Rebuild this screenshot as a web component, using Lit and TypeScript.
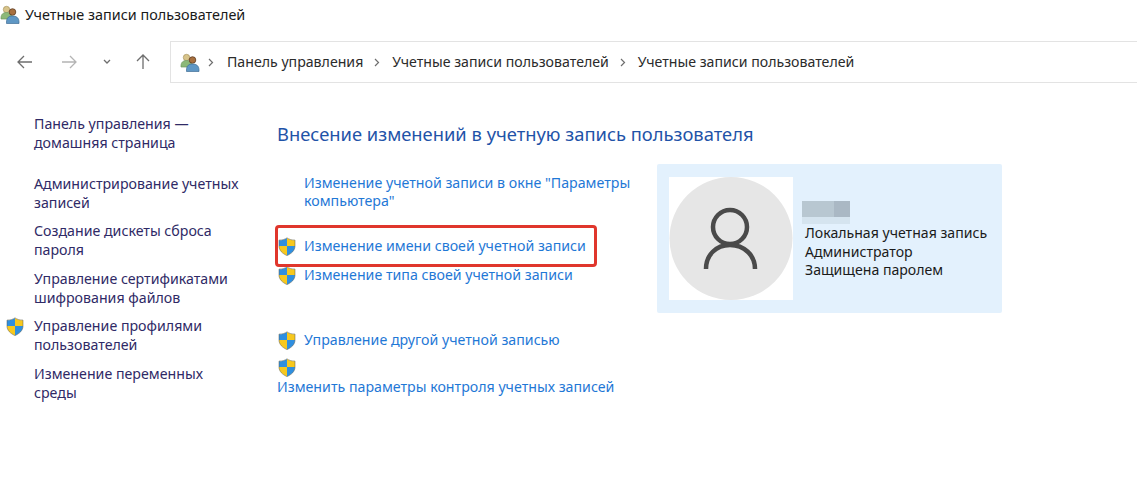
import { LitElement, html, css, svg } from "lit";
import { customElement } from "lit/decorators.js";

const usersIcon = (size: number) => html`<svg width=${size} height=${size} viewBox="0 0 20 20">
  <circle cx="6.5" cy="5.5" r="3.2" fill="#d8c48a" stroke="#a89560" stroke-width=".7"/>
  <path d="M1 14c0-4 2.5-5.5 5.5-5.5S12 10 12 14v1H1z" fill="#8cb878" stroke="#6f9660" stroke-width=".7"/>
  <circle cx="12.5" cy="8" r="3.3" fill="#a8703f" stroke="#5e3c22" stroke-width=".8"/>
  <path d="M6.5 18c0-4.5 2.5-6 6-6s6.5 1.500 6.500 6v1.500H6.500z" fill="#5f97c4" stroke="#3f6f96" stroke-width=".7"/>
</svg>`;

const shield = html`<svg class="shield" width="18" height="19" viewBox="0 0 18 19">
  <path d="M9 1C7 2.600 4 3.300 1 3.300V9h8z" fill="#2f8fe0"/>
  <path d="M9 1c2 1.600 5 2.300 8 2.300V9H9z" fill="#f7c81e"/>
  <path d="M1 9h8v9.500C4.500 16.600 1 13.500 1 9z" fill="#f7c81e"/>
  <path d="M9 9h8c0 4.500-3.500 7.600-8 9.500z" fill="#2f8fe0"/>
  <path d="M9 .8C7 2.400 4 3.100 1 3.100V9c0 4.500 3.500 7.600 8 9.600 4.500-2 8-5.100 8-9.600V3.100c-3 0-6-.7-8-2.300z" fill="none" stroke="#5a5a4a" stroke-width=".5"/>
</svg>`;

const navBack = svg`<path d="M16 8H2M8 2 2 8l6 6" fill="none" stroke-width="1.300"/>`;
const navForward = svg`<path d="M1 8h14M9 2l6 6-6 6" fill="none" stroke-width="1.300"/>`;
const navUp = svg`<path d="M8 16V2M2 8l6-6 6 6" fill="none" stroke-width="1.300"/>`;

@customElement("app-root")
export class AppRoot extends LitElement {
  static styles = css`
    :host {
      display: block;
      width: 1137px;
      height: 503px;
      background: #fff;
      overflow: hidden;
      position: relative;
      font-family: "Noto Sans", "Open Sans", sans-serif;
      font-size: 14.2px;
      color: #000;
    }
    .title {
      display: flex;
      align-items: center;
      height: 28px;
      gap: 5px;
      font-size: 14.4px;
      color: #1a1a1a;
    }
    .nav {
      display: flex;
      align-items: stretch;
      height: 42px;
      margin-top: 13px;
    }
    .btns {
      width: 170px;
      display: flex;
      align-items: center;
      flex: none;
    }
    .btn { stroke: #6e6e6e; display: block; flex: none; }
    .btn.off { stroke: #b4b4b4; }
    .back { margin-left: 16px; }
    .fwd { margin-left: 27px; }
    .down { margin-left: 26px; }
    .up { margin-left: 24px; }
    .crumbs {
      flex: 1;
      display: flex;
      align-items: center;
      border: 1px solid #e3e3e3;
      border-right: none;
      padding-left: 9px;
      color: #2b2b2b;
      white-space: nowrap;
      font-size: 14.15px;
    }
    .crumbs span { margin-top: -2px; }
    .crumbs svg { flex: none; }
    .sep { margin: 0 12px 0 11px; flex: none; display: block; }
    .sep.first { margin: 0 13px 0 8px; }
    .body {
      display: flex;
      padding-top: 31px;
    }
    .side {
      width: 277px;
      flex: none;
      padding: 0 0 0 34px;
      box-sizing: border-box;
      color: #2f2a66;
      line-height: 19px;
    }
    .side-item { position: relative; width: 215px; margin-bottom: 9.4px; }
    .side-item.home { margin-bottom: 22px; }
    .side-item .shield { position: absolute; left: -28px; top: 1px; }
    .main { width: 380px; flex: none; }
    h1 {
      margin: 8px 0 0;
      font-weight: 400;
      font-size: 18.35px;
      line-height: 24px;
      color: #1f53a8;
      white-space: nowrap;
    }
    .links { color: #1f78d6; margin-top: 28px; }
    .link { position: relative; padding-left: 27px; line-height: 18px; width: 350px; }
    .link .shield { position: absolute; left: 1px; top: 1px; }
    .m1 { margin-top: 26px; line-height: 19px; }
    .m2 { margin-top: 10px; line-height: 19px; }
    .m3 { margin-top: 46px; line-height: 19px; }
    .solo { margin-top: 9px; height: 18px; padding-left: 1px; }
    .solo-text { line-height: 19px; margin-top: 1px; white-space: nowrap; }
    .panel {
      flex: none;
      align-self: flex-start;
      margin-top: 50px;
      width: 345px;
      height: 149px;
      box-sizing: border-box;
      background: #e3f1fd;
      border-radius: 2px;
      padding: 13px 12px;
      display: flex;
    }
    .avatar {
      width: 124px;
      height: 123px;
      background: #fff;
      flex: none;
      display: block;
    }
    .info { padding: 24px 0 0 9px; color: #1a1a1a; white-space: nowrap; font-size: 14.1px; line-height: 18.6px; }
    .blur {
      width: 48px;
      height: 23px;
      display: flex;
      flex-wrap: wrap;
    }
    .blur i { display: block; height: 16px; width: 16px; background: #b8c7d1; }
    .blur i:last-of-type { background: #aab8c4; }
    .blur b { display: block; width: 48px; height: 7px; background: #d5e4ef; }
    .info-lines { margin: 0 0 0 3px; }
    .mark {
      position: absolute;
      left: 275px;
      top: 225px;
      width: 322px;
      height: 42px;
      box-sizing: border-box;
      border: 3px solid #e0362c;
      border-radius: 4px;
    }
  `;

  render() {
    return html`
      <div class="title">${usersIcon(20)}<span>Учетные записи пользователей</span></div>
      <div class="nav">
        <div class="btns">
          <svg class="btn back" width="18" height="16" viewBox="0 0 18 16">${navBack}</svg>
          <svg class="btn off fwd" width="16" height="16" viewBox="0 0 16 16">${navForward}</svg>
          <svg class="btn down" width="8" height="6" viewBox="0 0 8 6"><path d="M1 1l3 3 3-3" fill="none" stroke-width="1.300"/></svg>
          <svg class="btn up" width="16" height="18" viewBox="0 0 16 18">${navUp}</svg>
        </div>
        <div class="crumbs">
          ${usersIcon(20)}
          <svg class="btn sep first" width="6" height="9" viewBox="0 0 6 9"><path d="M1 1l3.500 3.500L1 8" fill="none" stroke-width="1.200"/></svg>
          <span>Панель управления</span>
          <svg class="btn sep" width="6" height="9" viewBox="0 0 6 9"><path d="M1 1l3.500 3.500L1 8" fill="none" stroke-width="1.200"/></svg>
          <span>Учетные записи пользователей</span>
          <svg class="btn sep" width="6" height="9" viewBox="0 0 6 9"><path d="M1 1l3.500 3.500L1 8" fill="none" stroke-width="1.200"/></svg>
          <span>Учетные записи пользователей</span>
        </div>
      </div>
      <div class="body">
        <div class="side">
          <div class="side-item home">Панель управления —<br />домашняя страница</div>
          <div class="side-item">Администрирование учетных записей</div>
          <div class="side-item">Создание дискеты сброса пароля</div>
          <div class="side-item">Управление сертификатами шифрования файлов</div>
          <div class="side-item">${shield}Управление профилями пользователей</div>
          <div class="side-item">Изменение переменных<br />среды</div>
        </div>
        <div class="main">
          <h1>Внесение изменений в учетную запись пользователя</h1>
          <div class="links">
            <div class="link">Изменение учетной записи в окне "Параметры компьютера"</div>
            <div class="link m1">${shield}Изменение имени своей учетной записи</div>
            <div class="link m2">${shield}Изменение типа своей учетной записи</div>
            <div class="link m3">${shield}Управление другой учетной записью</div>
            <div class="solo">${shield}</div>
            <div class="solo-text">Изменить параметры контроля учетных записей</div>
          </div>
        </div>
        <div class="panel">
          <svg class="avatar" viewBox="0 0 124 123">
            <circle cx="62" cy="61.500" r="61.500" fill="#e6e6e6"/>
            <circle cx="61" cy="50" r="17" fill="none" stroke="#4a4a4a" stroke-width="4.500"/>
            <path d="M37 92C37 78 47 68 61 68S86 78 86 92" fill="none" stroke="#4a4a4a" stroke-width="4.500"/>
          </svg>
          <div class="info">
            <div class="blur"><i></i><i></i><i></i><b></b></div>
            <div class="info-lines">Локальная учетная запись<br />Администратор<br />Защищена паролем</div>
          </div>
        </div>
      </div>
      <div class="mark"></div>
    `;
  }
}
